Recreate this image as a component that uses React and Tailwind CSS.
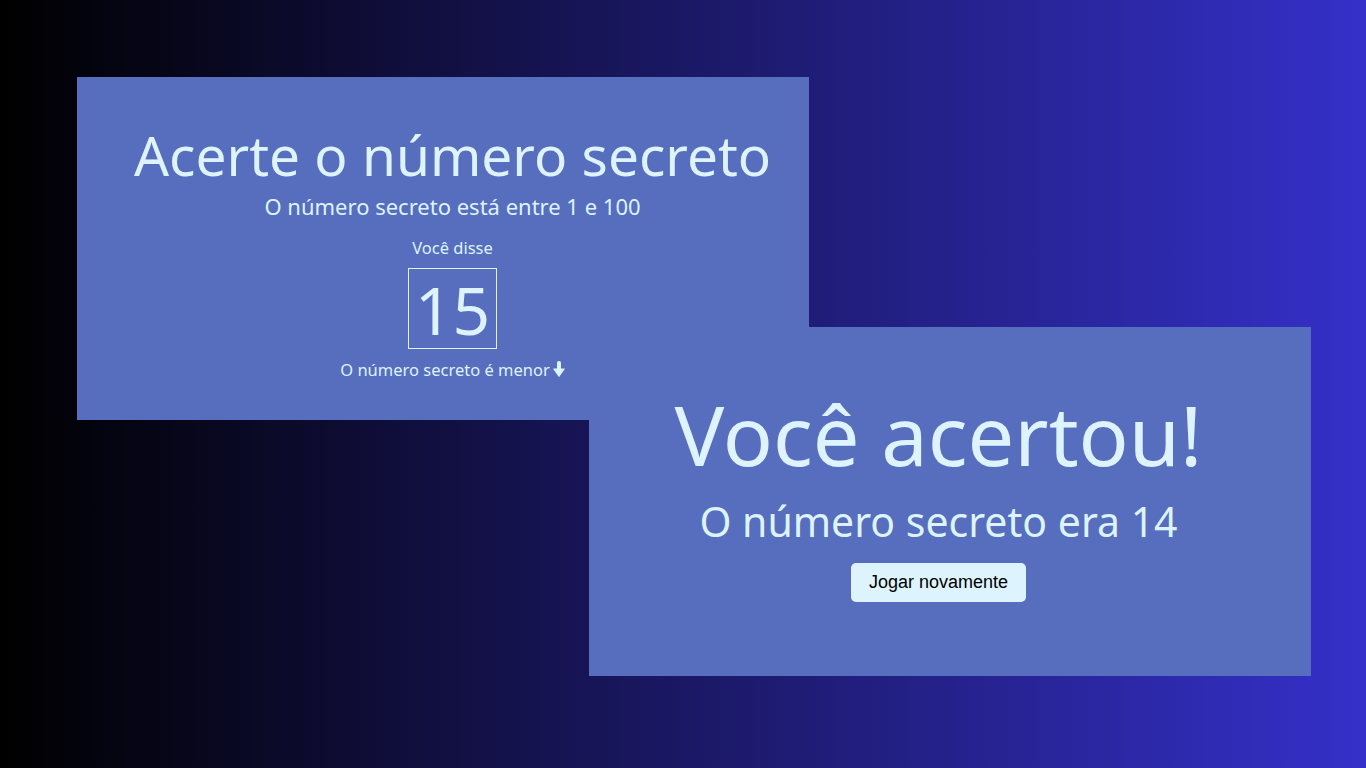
import React from 'react';

function DownArrow() {
  return (
    <svg width="12" height="16" viewBox="0 0 12 16" className="ml-[3px] mb-[3.5px] shrink-0">
      <rect x="4" y="0" width="4" height="10.5" rx="1.7" fill="#ddf4ff" />
      <path d="M0.2 8 Q0 7.5 0.7 7.5 L11.3 7.5 Q12 7.5 11.8 8 L6.5 15.6 Q6 16.2 5.5 15.6 Z" fill="#ddf4ff" />
    </svg>
  );
}

export default function App() {
  const chute = 15;
  const secreto = 14;

  return (
    <div className="h-screen w-full overflow-hidden pt-[77px] bg-[linear-gradient(90deg,#000000_0%,#3530c9_100%)] text-[#ddf4ff] font-['Noto_Sans',sans-serif]">
      {/* tela do jogo */}
      <section className="ml-[77px] w-[732px] h-[343px] bg-[#576dbd] flex flex-col items-center pt-[45px] pl-[19px]">
        <h1 className="text-[55px] leading-[66px] font-normal whitespace-nowrap">Acerte o número secreto</h1>
        <p className="text-[22px] leading-[30px] mt-[3px]">O número secreto está entre 1 e 100</p>
        <p className="text-[16.5px] leading-[20px] mt-[17px]">Você disse</p>
        <div className="mt-[10px] w-[89px] h-[81px] border border-[#ddf4ff] flex items-center justify-center text-[66px] leading-none">
          {chute}
        </div>
        <p className="text-[16.5px] leading-[20px] mt-[11px] flex items-end">
          O número secreto é menor
          <DownArrow />
        </p>
      </section>

      {/* tela de acerto */}
      <section className="ml-[589px] -mt-[93px] w-[722px] h-[349px] bg-[#576dbd] flex flex-col items-center pt-[59px] pr-[23px] relative">
        <h2 className="text-[83px] leading-[96px] font-normal whitespace-nowrap">Você acertou!</h2>
        <p className="text-[41px] leading-[48px] mt-[15px] whitespace-nowrap">O número secreto era {secreto}</p>
        <button className="mt-[18px] h-[39px] px-[18px] rounded-[5px] bg-[#ddf4ff] text-black text-[18px] font-['Liberation_Sans',Arial,sans-serif]">
          Jogar novamente
        </button>
      </section>
    </div>
  );
}
